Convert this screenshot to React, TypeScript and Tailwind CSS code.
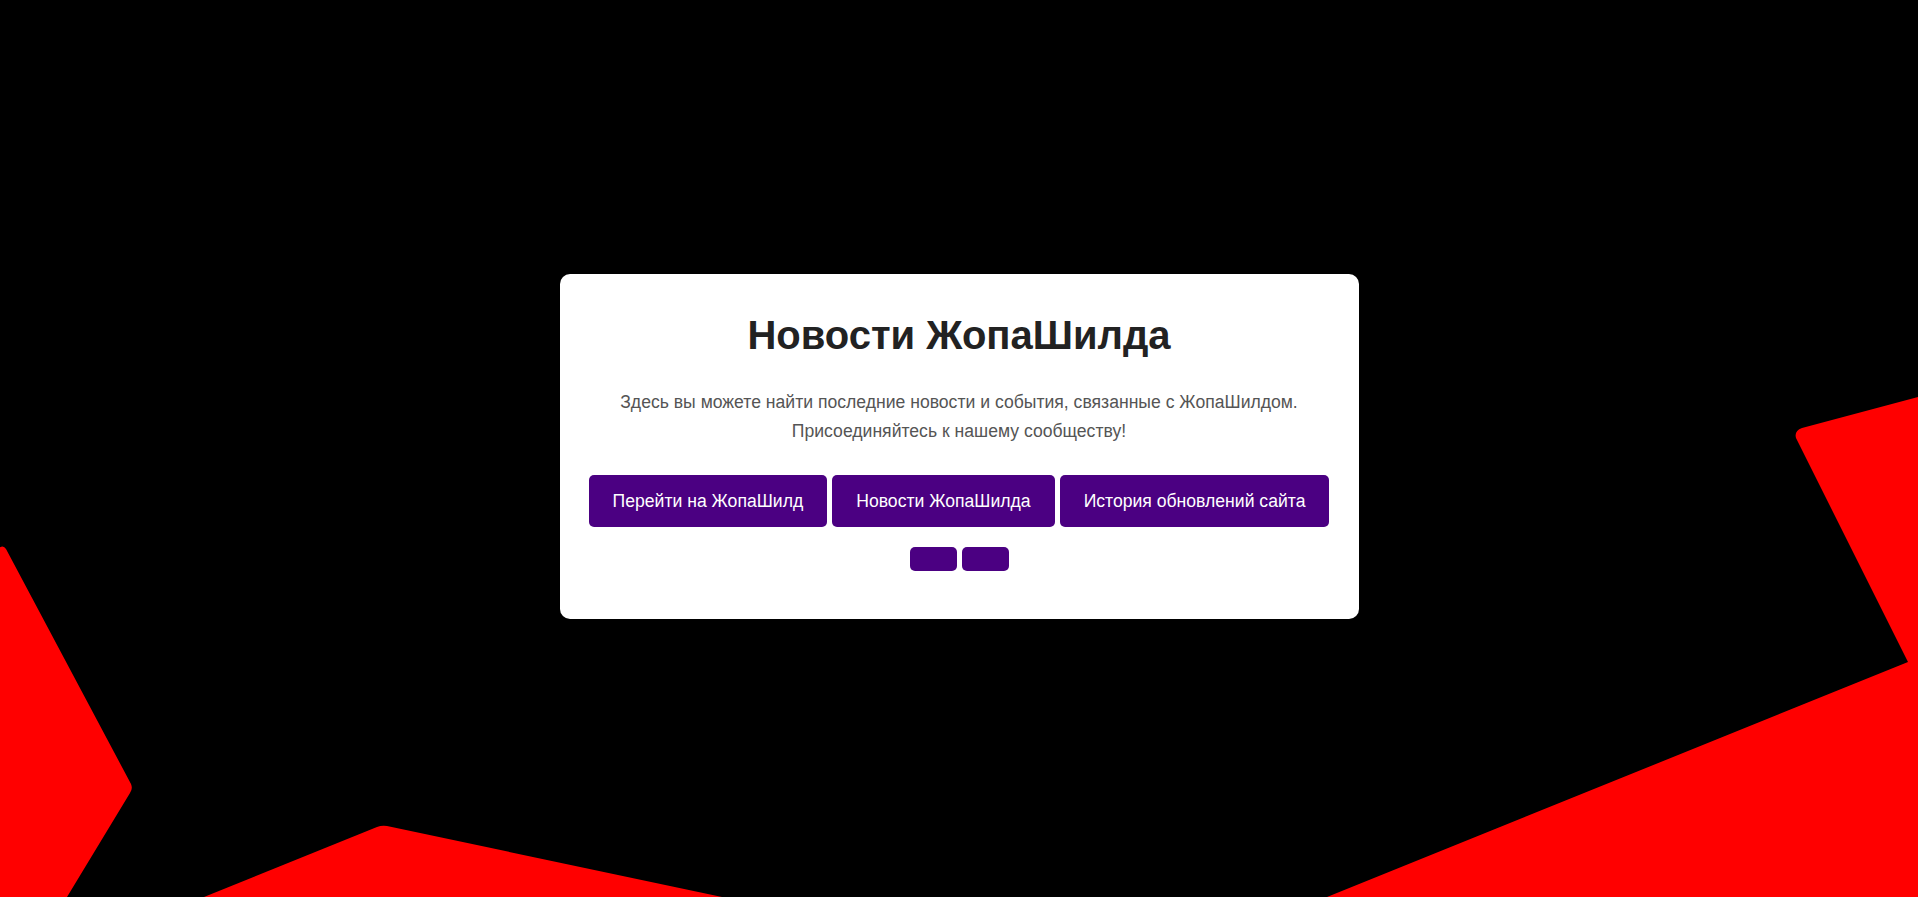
import React from "react";

const links = ["Перейти на ЖопаШилд", "Новости ЖопаШилда", "История обновлений сайта"];

function RedShapes() {
  return (
    <svg
      className="absolute inset-0 w-full h-full pointer-events-none"
      viewBox="0 0 1918 897"
      preserveAspectRatio="none"
    >
      <path
        d="M-40 560 L-2 549 Q3 544 6 549 L131 784 Q133 789 130 793 L67 897 L-40 897 Z"
        fill="#ff0000"
      />
      <path
        d="M204 897 L377 827 Q382 825 387 826 L722 897 Z"
        fill="#ff0000"
      />
      <path
        d="M1802 428 L1918 397 L1918 897 L1327 897 L1908 662 L1796 438 Q1794 431 1802 428 Z"
        fill="#ff0000"
      />
    </svg>
  );
}

export default function App() {
  return (
    <div
      className="relative min-h-screen w-full overflow-hidden bg-black flex items-center justify-center pb-1"
      style={{ fontFamily: '"Liberation Sans", Arial, sans-serif' }}
    >
      <RedShapes />
      <div className="relative z-10 w-[799px] bg-white rounded-[10px] px-[29px] pt-[38px] pb-[48px] text-center">
        <h1 className="text-[40px] leading-[46px] font-bold text-[#222]">Новости ЖопаШилда</h1>
        <p className="mt-[30px] text-[17.6px] leading-[1.6] text-[#555]">
          Здесь вы можете найти последние новости и события, связанные с ЖопаШилдом.
          <br />
          Присоединяйтесь к нашему сообществу!
        </p>
        <div className="mt-[30px] flex justify-center gap-[5px]">
          {links.map((l) => (
            <button
              key={l}
              className="shrink-0 whitespace-nowrap bg-[#4b0082] text-white text-[17.6px] leading-5 py-4 px-6 rounded-[5px]"
            >
              {l}
            </button>
          ))}
        </div>
        <div className="mt-5 flex justify-center gap-[5px]">
          <button className="bg-[#4b0082] w-[47px] h-6 rounded-[5px]" />
          <button className="bg-[#4b0082] w-[47px] h-6 rounded-[5px]" />
        </div>
      </div>
    </div>
  );
}
